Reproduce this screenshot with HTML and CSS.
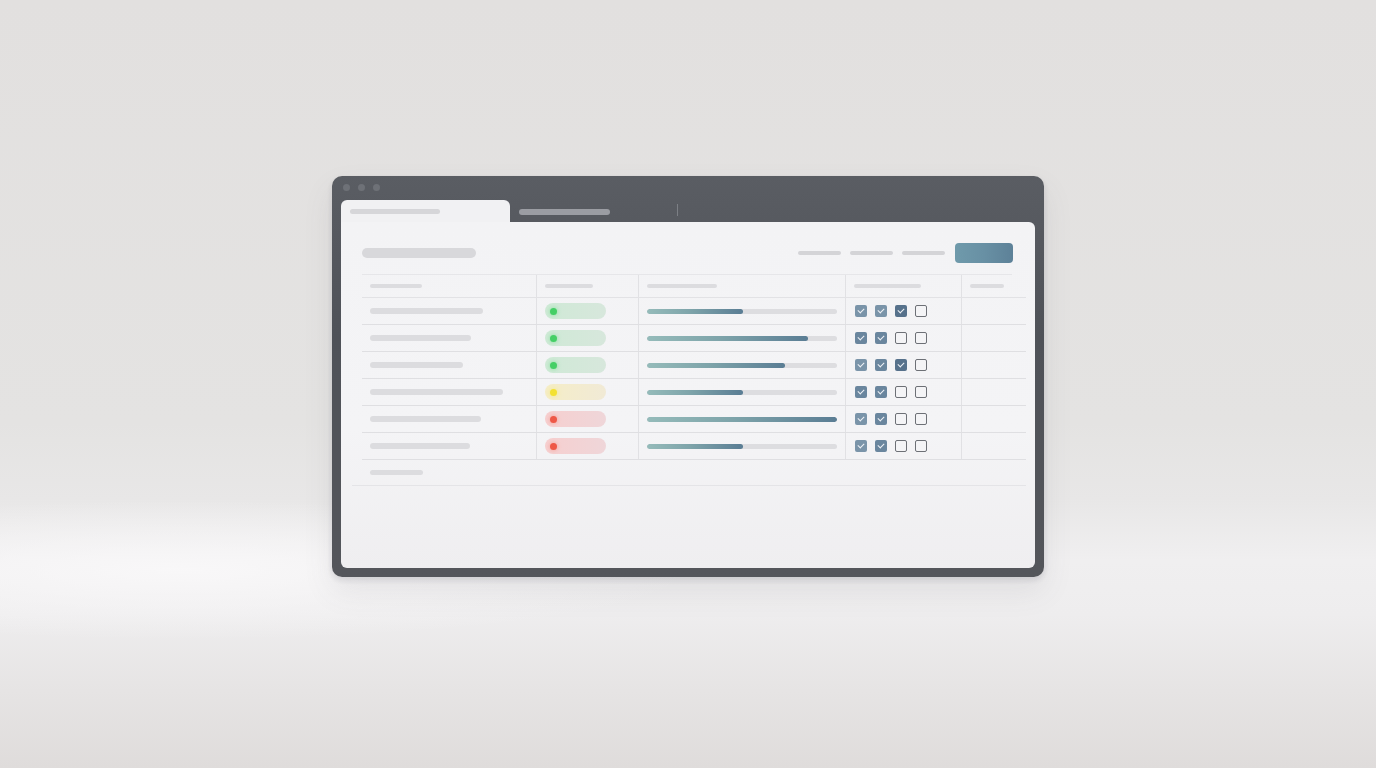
FILE: index.html
```html
<!DOCTYPE html>
<html>
<head>
<meta charset="utf-8">
<link rel="stylesheet" href="styles.css">
</head>
<body>
<div class="scene">
  <div class="window">
    <div class="chrome">
      <div class="dots"><span></span><span></span><span></span></div>
      <div class="tabs">
        <div class="tab active"><i class="sk sk-tab"></i></div>
        <div class="tab"><i class="sk sk-tab2"></i></div>
        <div class="tab-sep"></div>
      </div>
    </div>
    <div class="content">
      <div class="toolbar">
        <i class="sk sk-title"></i>
        <div class="actions">
          <i class="sk sk-link"></i><i class="sk sk-link"></i><i class="sk sk-link"></i>
          <div class="btn"></div>
        </div>
      </div>
      <div class="table">
        <div class="row head">
          <div class="cell"><i class="sk sk-h" style="width:52px"></i></div>
          <div class="cell"><i class="sk sk-h" style="width:48px"></i></div>
          <div class="cell"><i class="sk sk-h" style="width:70px"></i></div>
          <div class="cell"><i class="sk sk-h" style="width:67px"></i></div>
          <div class="cell"><i class="sk sk-h" style="width:34px"></i></div>
        </div>
        <div class="row">
          <div class="cell"><i class="sk sk-name" style="width:113px"></i></div>
          <div class="cell"><span class="pill green"><b></b></span></div>
          <div class="cell"><span class="track"><span class="fill" style="width:96px"></span></span></div>
          <div class="cell checks"><span class="cb on l"></span><span class="cb on l"></span><span class="cb on d"></span><span class="cb"></span></div>
          <div class="cell"></div>
        </div>
        <div class="row">
          <div class="cell"><i class="sk sk-name" style="width:101px"></i></div>
          <div class="cell"><span class="pill green"><b></b></span></div>
          <div class="cell"><span class="track"><span class="fill" style="width:161px"></span></span></div>
          <div class="cell checks"><span class="cb on"></span><span class="cb on"></span><span class="cb"></span><span class="cb"></span></div>
          <div class="cell"></div>
        </div>
        <div class="row">
          <div class="cell"><i class="sk sk-name" style="width:93px"></i></div>
          <div class="cell"><span class="pill green"><b></b></span></div>
          <div class="cell"><span class="track"><span class="fill" style="width:138px"></span></span></div>
          <div class="cell checks"><span class="cb on l"></span><span class="cb on"></span><span class="cb on d"></span><span class="cb"></span></div>
          <div class="cell"></div>
        </div>
        <div class="row">
          <div class="cell"><i class="sk sk-name" style="width:133px"></i></div>
          <div class="cell"><span class="pill yellow"><b></b></span></div>
          <div class="cell"><span class="track"><span class="fill" style="width:96px"></span></span></div>
          <div class="cell checks"><span class="cb on"></span><span class="cb on"></span><span class="cb"></span><span class="cb"></span></div>
          <div class="cell"></div>
        </div>
        <div class="row">
          <div class="cell"><i class="sk sk-name" style="width:111px"></i></div>
          <div class="cell"><span class="pill red"><b></b></span></div>
          <div class="cell"><span class="track"><span class="fill" style="width:190px"></span></span></div>
          <div class="cell checks"><span class="cb on l"></span><span class="cb on"></span><span class="cb"></span><span class="cb"></span></div>
          <div class="cell"></div>
        </div>
        <div class="row">
          <div class="cell"><i class="sk sk-name" style="width:100px"></i></div>
          <div class="cell"><span class="pill red"><b></b></span></div>
          <div class="cell"><span class="track"><span class="fill" style="width:96px"></span></span></div>
          <div class="cell checks"><span class="cb on l"></span><span class="cb on"></span><span class="cb"></span><span class="cb"></span></div>
          <div class="cell"></div>
        </div>
        <div class="foot"><i class="sk sk-name" style="width:53px"></i></div>
      </div>
    </div>
  </div>
</div>
</body>
</html>
```
FILE: styles.css
```css
html, body {
  margin: 0;
  padding: 0;
  width: 1376px;
  height: 768px;
  overflow: hidden;
  font-family: "Liberation Sans", Arial, sans-serif;
}
body {
  background:
    radial-gradient(ellipse 520px 70px at 180px 570px, rgba(250,249,250,0.85), rgba(250,249,250,0) 100%),
    linear-gradient(180deg, #e2e0df 0%, #e4e3e2 55%, #e8e7e7 65%, #f0eff0 73%, #eeedee 80%, #e6e4e4 90%, #dfdcdb 100%);
}
.scene {
  display: flex;
  justify-content: center;
  padding-top: 176px;
}
.window {
  width: 712px;
  height: 401px;
  box-sizing: border-box;
  background: linear-gradient(180deg, #5a5d63 0%, #4f5258 40%, #54565b 100%);
  border-radius: 10px;
  padding: 0 9px 9px 9px;
  display: flex;
  flex-direction: column;
  box-shadow: 0 14px 30px rgba(90, 90, 100, 0.10), 0 3px 6px rgba(60,60,70,0.14);
  filter: blur(0.5px);
}
.chrome {
  height: 46px;
  display: flex;
  flex-direction: column;
}
.dots {
  display: flex;
  gap: 8px;
  padding: 8px 0 0 2px;
  height: 16px;
  box-sizing: border-box;
}
.dots span {
  width: 7px;
  height: 7px;
  border-radius: 50%;
  background: #6e7177;
}
.tabs {
  display: flex;
  align-items: flex-end;
  height: 22px;
  margin-top: 8px;
}
.tab {
  width: 169px;
  height: 22px;
  box-sizing: border-box;
  padding: 9px 0 0 9px;
}
.tab.active {
  background: #f1f1f3;
  border-radius: 6px 6px 0 0;
}
.tab-sep {
  width: 1px;
  height: 12px;
  background: #7c7f85;
  align-self: flex-end;
  margin-bottom: 6px;
  margin-left: -2px;
}
.sk {
  display: block;
  border-radius: 3px;
  background: #dadadd;
}
.sk-tab { width: 90px; height: 5px; background: #d6d6d9; }
.sk-tab2 { width: 91px; height: 6px; background: #9b9da3; }
.content {
  flex: 1;
  background: linear-gradient(180deg, #f3f3f5 0%, #f4f4f6 60%, #efeef0 100%);
  border-radius: 0 6px 6px 6px;
  padding: 21px 22px 0 21px;
  box-sizing: border-box;
}
.toolbar {
  display: flex;
  align-items: center;
  justify-content: space-between;
  height: 20px;
}
.sk-title { width: 114px; height: 10px; background: #d8d8db; border-radius: 5px; }
.actions {
  display: flex;
  align-items: center;
  gap: 9px;
}
.sk-link { width: 43px; height: 4px; background: #d4d4d7; }
.btn {
  width: 58px;
  height: 20px;
  border-radius: 4px;
  background: linear-gradient(90deg, #6f9aab 0%, #6890a4 50%, #5d8198 100%);
  margin-left: 1px;
}
.table {
  margin-top: 11px;
  width: 650px;
  border-top: 1px solid #e6e6e9;
}
.row {
  display: grid;
  grid-template-columns: 174px 102px 207px 116px 51px;
  height: 27px;
  border-bottom: 1px solid #dfdfe2;
  box-sizing: border-box;
  margin-right: -14px;
  padding-right: 14px;
}
.row.head {
  height: 23px;
  border-bottom: 1px solid #e2e2e5;
}
.cell {
  display: flex;
  align-items: center;
  padding-left: 8px;
  border-left: 1px solid #e1e1e4;
}
.cell:first-child { border-left: none; }
.sk-h { height: 4px; background: #dcdcdf; }
.sk-name { height: 6px; background: #dcdcdf; }
.pill {
  width: 61px;
  height: 16px;
  border-radius: 8px;
  display: flex;
  align-items: center;
  padding-left: 5px;
  box-sizing: border-box;
}
.pill b {
  width: 7px;
  height: 7px;
  border-radius: 50%;
}
.pill.green { background: linear-gradient(90deg, #cfe9d6, #d7e7dc); }
.pill.green b { background: #45cf66; box-shadow: 0 0 4px #7fe097; }
.pill.yellow { background: linear-gradient(90deg, #f5edc7, #f1ead6); }
.pill.yellow b { background: #f3e131; box-shadow: 0 0 5px #f5ea7a; }
.pill.red { background: linear-gradient(90deg, #f6cfcf, #efd6d9); }
.pill.red b { background: #ee5847; box-shadow: 0 0 4px #f49a90; }
.track {
  width: 190px;
  height: 5px;
  border-radius: 3px;
  background: #dddde0;
  display: block;
  overflow: hidden;
}
.fill {
  display: block;
  height: 5px;
  border-radius: 3px;
  background: linear-gradient(90deg, #95bbba 0%, #7ea4aa 45%, #5a7d94 100%);
}
.checks { gap: 8px; padding-left: 9px; }
.cb {
  width: 12px;
  height: 12px;
  box-sizing: border-box;
  border: 1.5px solid #6d7076;
  border-radius: 2px;
  background: #f4f4f6;
  position: relative;
}
.cb.on {
  border: none;
  background: #6a869e;
}
.cb.on.l { background: #7a94a9; }
.cb.on.d { background: #56718b; }
.cb.on::after {
  content: "";
  position: absolute;
  left: 3px;
  top: 2.5px;
  width: 5px;
  height: 3px;
  border-left: 1.5px solid #eef2f6;
  border-bottom: 1.5px solid #eef2f6;
  transform: rotate(-45deg);
}
.foot {
  height: 25px;
  display: flex;
  align-items: center;
  border-bottom: 1px solid #e4e4e7;
  margin-left: -10px;
  margin-right: -14px;
  padding-left: 18px;
}
.foot .sk { height: 5px; background: #dcdcdf; }
```
